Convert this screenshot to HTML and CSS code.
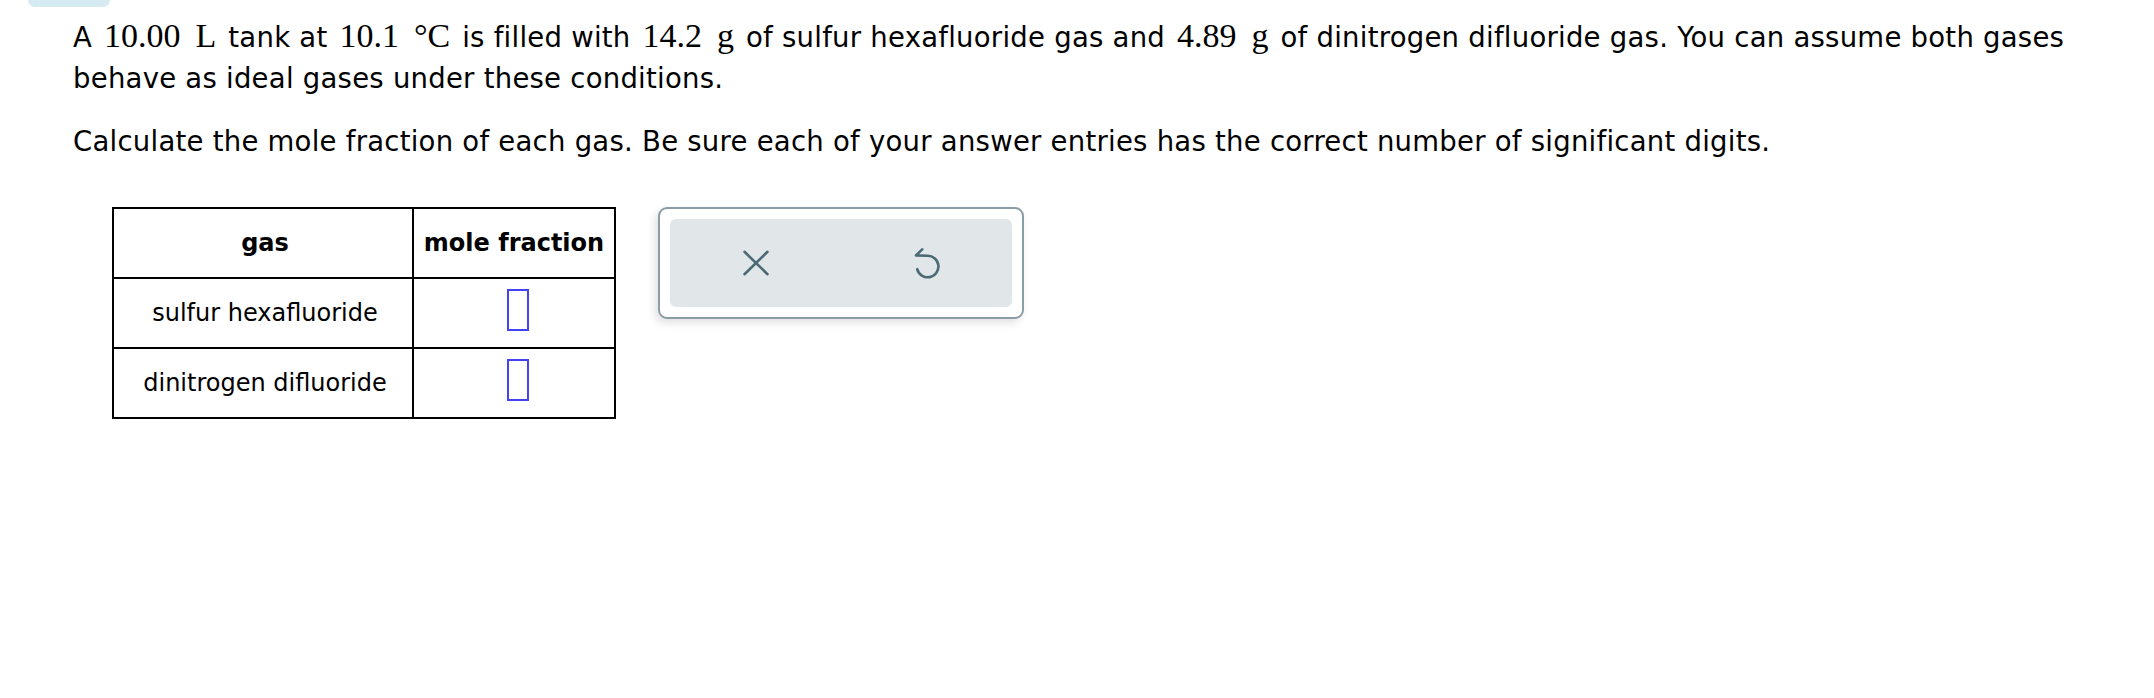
FILE: index.html
```html
<!DOCTYPE html>
<html>
<head>
<meta charset="utf-8">
<link rel="stylesheet" href="styles.css">
</head>
<body>
<div class="tab"></div>
<div class="page">
  <p class="para">A <span class="m">10.00</span> <span class="m">L</span> tank at <span class="m">10.1</span> <span class="m">°C</span> is filled with <span class="m">14.2</span> <span class="m">g</span> of sulfur hexafluoride gas and <span class="m">4.89</span> <span class="m">g</span> of dinitrogen difluoride gas. You can assume both gases behave as ideal gases under these conditions.</p>
  <p class="para">Calculate the mole fraction of each gas. Be sure each of your answer entries has the correct number of significant digits.</p>
  <div class="work">
    <table class="grid">
      <tr><th class="c1">gas</th><th class="c2">mole fraction</th></tr>
      <tr><td class="c1">sulfur hexafluoride</td><td class="c2 ans"><span class="box"></span></td></tr>
      <tr><td class="c1">dinitrogen difluoride</td><td class="c2 ans"><span class="box"></span></td></tr>
    </table>
    <div class="tools">
      <div class="tools-inner">
        <div class="tool">
          <svg width="32" height="32" viewBox="0 0 32 32"><path d="M4.5 4.8 L27.5 27.2 M27.5 4.8 L4.5 27.2" fill="none" stroke="#4c6a76" stroke-width="2.6" stroke-linecap="round"/></svg>
        </div>
        <div class="tool">
          <svg width="32" height="32" viewBox="0 0 32 32"><path d="M6.2 22.2 A10.8 10.8 0 1 0 16.5 8.7 L5 8.4 M11.2 2.4 L5 8.4" fill="none" stroke="#4c6a76" stroke-width="2.6" stroke-linecap="round" stroke-linejoin="round"/></svg>
        </div>
      </div>
    </div>
  </div>
</div>
</body>
</html>
```

FILE: styles.css
```css
html, body {
  margin: 0;
  padding: 0;
  background: #fff;
}
body {
  font-family: "DejaVu Sans", Verdana, sans-serif;
  color: #000;
}
.tab {
  width: 82px;
  height: 7px;
  margin-left: 28px;
  background: #d5ebf1;
  border-radius: 0 0 9px 9px;
}
.page {
  padding: 8px 40px 0 73px;
}
.para {
  font-size: 27.5px;
  letter-spacing: 0.25px;
  line-height: 41px;
  margin: 0 0 22px 0;
}
.m {
  font-family: "Liberation Serif", "Times New Roman", serif;
  font-size: 34px;
  letter-spacing: 0;
  margin: 0 3px;
}
.work {
  display: flex;
  align-items: flex-start;
  gap: 42px;
  padding-left: 39px;
  margin-top: 45px;
}
.grid {
  border-collapse: collapse;
  font-size: 24px;
}
.grid th, .grid td {
  border: 2px solid #000;
  height: 68px;
  padding: 0;
  text-align: center;
  vertical-align: middle;
}
.grid th {
  font-weight: bold;
}
.grid .c1 {
  width: 294px;
  padding-left: 4px;
}
.c2 {
  width: 200px;
}
.grid td.ans {
  height: 61px;
  padding-bottom: 7px;
}
.box {
  display: inline-block;
  width: 18px;
  height: 38px;
  border: 2px solid #4343f2;
  vertical-align: middle;
  margin-left: 8px;
}
.tools {
  width: 342px;
  height: 88px;
  padding: 10px;
  border: 2px solid #8a9ca6;
  border-radius: 9px;
  background: #fff;
  box-shadow: -3px 4px 9px rgba(0, 0, 0, 0.12);
}
.tools-inner {
  display: grid;
  grid-template-columns: 1fr 1fr;
  height: 88px;
  background: #e1e6e8;
  border-radius: 6px;
}
.tool {
  display: flex;
  align-items: center;
  justify-content: center;
}
.tool svg {
  display: block;
}
```
